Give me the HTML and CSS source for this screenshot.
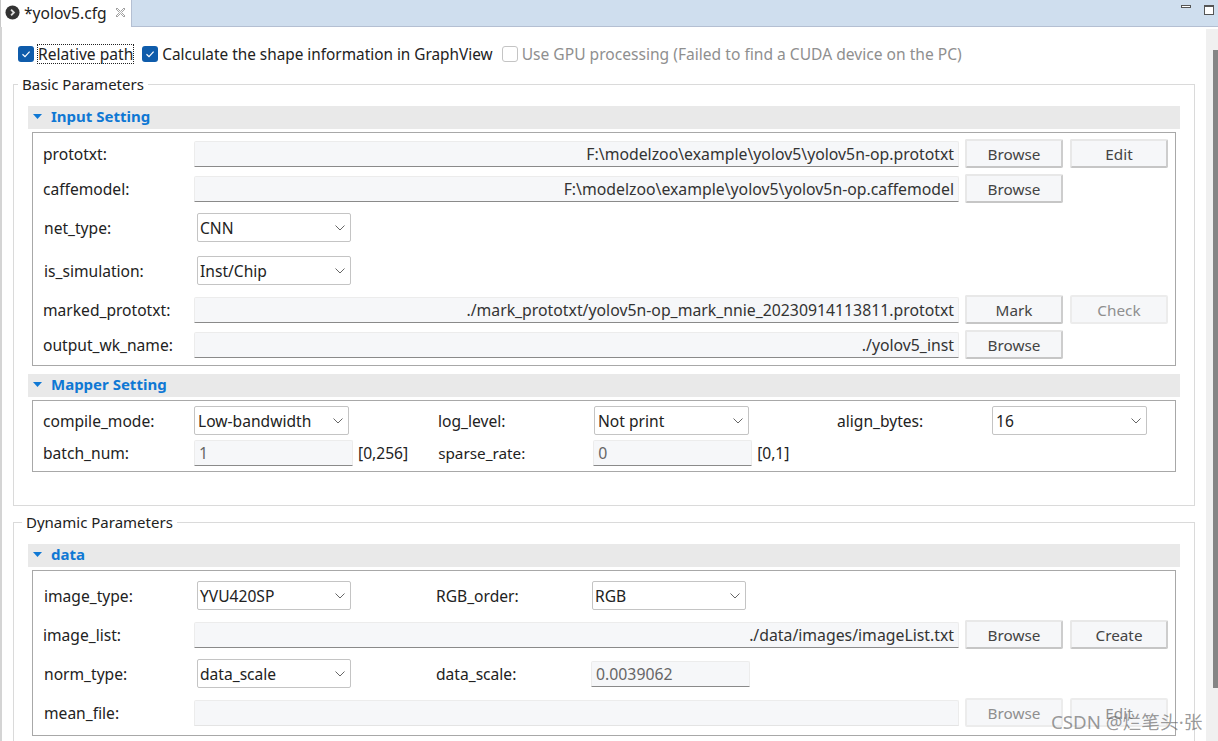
FILE: index.html
```html
<!DOCTYPE html>
<html lang="en">

<head>
    <meta charset="UTF-8">
    <title>yolov5.cfg</title>
    <link rel="stylesheet" href="styles.css">
</head>

<body>
    <svg class="defs" width="0" height="0">
        <symbol id="chev" viewBox="0 0 10 6">
            <path d="M0.5 0.5 L5 5 L9.5 0.5" fill="none" stroke="#666" stroke-width="1" />
        </symbol>
        <symbol id="tick" viewBox="0 0 16 16">
            <rect width="16" height="16" rx="3" fill="#0f5cab" />
            <path d="M4.5 8.2 L7 10.6 L11.6 5.6" fill="none" stroke="#fff" stroke-width="1.2" />
        </symbol>
        <symbol id="arrow" viewBox="0 0 9 5">
            <path d="M0 0 H9 L4.5 5 Z" fill="#0f78d4" />
        </symbol>
    </svg>

    <div class="tabbar">
        <div class="tab">
            <svg class="tab-icon" viewBox="0 0 16 16">
                <circle cx="8" cy="8" r="7.5" fill="#333" />
                <path d="M6.5 5 L9.5 8 L6.5 11" fill="none" stroke="#ddd" stroke-width="2" />
            </svg>
            <span>*yolov5.cfg</span>
            <svg class="tab-close" viewBox="0 0 11 11">
                <path d="M1 2 L2 1 L5.5 4.5 L9 1 L10 2 L6.5 5.5 L10 9 L9 10 L5.5 6.5 L2 10 L1 9 L4.5 5.5 Z" fill="#fff" stroke="#8a8a8a" stroke-width="0.8" />
            </svg>
        </div>
        <div class="win-btns">
            <span class="win-min"></span>
            <span class="win-max"></span>
        </div>
    </div>

    <div class="editor">
        <div class="content">
            <div class="options">
                <svg class="check"><use href="#tick" /></svg>
                <span class="focused">Relative path</span>
                <svg class="check second"><use href="#tick" /></svg>
                <span class="calc">Calculate the shape information in GraphView</span>
                <span class="check-off"></span>
                <span class="muted">Use GPU processing (Failed to find a CUDA device on the PC)</span>
            </div>

            <fieldset class="group">
                <legend>Basic Parameters</legend>

                <div class="sec-head"><svg class="arrow"><use href="#arrow" /></svg>Input Setting</div>
                <div class="box box-input">
                    <div class="row">
                        <label>prototxt:</label>
                        <div class="text wide">F:\modelzoo\example\yolov5\yolov5n-op.prototxt</div>
                        <button>Browse</button>
                        <button>Edit</button>
                    </div>
                    <div class="row gap-6">
                        <label>caffemodel:</label>
                        <div class="text wide">F:\modelzoo\example\yolov5\yolov5n-op.caffemodel</div>
                        <button>Browse</button>
                    </div>
                    <div class="row gap-10">
                        <label class="lab-sel">net_type:</label>
                        <div class="select">CNN<svg class="chev"><use href="#chev" /></svg></div>
                    </div>
                    <div class="row gap-14">
                        <label class="lab-sel">is_simulation:</label>
                        <div class="select">Inst/Chip<svg class="chev"><use href="#chev" /></svg></div>
                    </div>
                    <div class="row gap-10">
                        <label>marked_prototxt:</label>
                        <div class="text wide">./mark_prototxt/yolov5n-op_mark_nnie_20230914113811.prototxt</div>
                        <button>Mark</button>
                        <button disabled>Check</button>
                    </div>
                    <div class="row gap-6">
                        <label>output_wk_name:</label>
                        <div class="text wide">./yolov5_inst</div>
                        <button>Browse</button>
                    </div>
                </div>

                <div class="sec-head mapper"><svg class="arrow"><use href="#arrow" /></svg>Mapper Setting</div>
                <div class="box box-mapper">
                    <div class="row">
                        <label>compile_mode:</label>
                        <div class="select sel-compile">Low-bandwidth<svg class="chev"><use href="#chev" /></svg></div>
                        <label class="lab-mid">log_level:</label>
                        <div class="select sel-compile">Not print<svg class="chev"><use href="#chev" /></svg></div>
                        <label class="lab-align">align_bytes:</label>
                        <div class="select sel-compile">16<svg class="chev"><use href="#chev" /></svg></div>
                    </div>
                    <div class="row row-short">
                        <label>batch_num:</label>
                        <div class="text num left">1</div>
                        <span class="range">[0,256]</span>
                        <label class="lab-sparse">sparse_rate:</label>
                        <div class="text num left">0</div>
                        <span class="range">[0,1]</span>
                    </div>
                </div>
            </fieldset>

            <fieldset class="group dynamic">
                <legend>Dynamic Parameters</legend>

                <div class="sec-head"><svg class="arrow"><use href="#arrow" /></svg>data</div>
                <div class="box box-data">
                    <div class="row">
                        <label class="lab-sel">image_type:</label>
                        <div class="select">YVU420SP<svg class="chev"><use href="#chev" /></svg></div>
                        <label class="lab-rgb">RGB_order:</label>
                        <div class="select">RGB<svg class="chev"><use href="#chev" /></svg></div>
                    </div>
                    <div class="row gap-10">
                        <label>image_list:</label>
                        <div class="text wide">./data/images/imageList.txt</div>
                        <button>Browse</button>
                        <button>Create</button>
                    </div>
                    <div class="row gap-10">
                        <label class="lab-sel">norm_type:</label>
                        <div class="select">data_scale<svg class="chev"><use href="#chev" /></svg></div>
                        <label class="lab-scale">data_scale:</label>
                        <div class="text num left">0.0039062</div>
                    </div>
                    <div class="row gap-10">
                        <label class="lab-pad">mean_file:</label>
                        <div class="text wide off"></div>
                        <button disabled>Browse</button>
                        <button disabled>Edit</button>
                    </div>
                </div>
            </fieldset>
        </div>

        <div class="scrollbar"><div class="thumb"></div></div>
    </div>

    <div class="watermark">CSDN @烂笔头·张</div>
</body>

</html>
```

FILE: styles.css
```css
body {
    margin: 0;
    width: 1218px;
    height: 741px;
    overflow: hidden;
    position: relative;
    background-color: #fff;
    color: #222;
    font-family: "Noto Sans", "Noto Sans CJK SC", sans-serif;
    font-size: 15.6px;
    line-height: 20px;
}

.defs {
    position: absolute;
}

/* tab strip */
.tabbar {
    height: 26px;
    display: flex;
    justify-content: space-between;
    background-color: #cfdeee;
    border-bottom: 1px solid #b4bfd2;
}

.tab {
    width: 132px;
    height: 27px;
    box-sizing: border-box;
    display: flex;
    align-items: center;
    padding: 0 0 2px 5px;
    background-color: #fff;
    border-right: 1px solid #b4bfd2;
    border-left: 1px solid #c8c8c8;
    font-size: 15.6px;
}

.tab-icon {
    width: 15px;
    height: 15px;
    margin-left: -1px;
    margin-right: 4px;
}

.tab-close {
    width: 11px;
    height: 11px;
    margin-left: 8px;
}

.win-btns {
    display: flex;
    align-items: flex-start;
    padding: 5px 4px 0 0;
}

.win-min {
    width: 10px;
    height: 3px;
    border: 1px solid #555;
    box-sizing: border-box;
    background-color: #fff;
    margin-right: 13px;
}

.win-max {
    width: 10px;
    height: 10px;
    border: 1px solid #555;
    border-top-width: 2px;
    box-sizing: border-box;
    background-color: #fff;
}

/* main area */
.editor {
    height: 714px;
    display: flex;
    border-left: 2px solid #d4d4d4;
}

.content {
    flex: 1;
    padding-left: 11px;
    min-width: 0;
}

.scrollbar {
    width: 12px;
    margin-top: 2px;
    background-color: #f0f0f0;
    padding: 21px 0 0 7px;
    box-sizing: border-box;
}

.thumb {
    width: 5px;
    height: 638px;
    background-color: #858585;
}

.options {
    height: 20px;
    margin-top: 17px;
    display: flex;
    align-items: center;
    padding-left: 5px;
    white-space: nowrap;
}

.check {
    width: 16px;
    height: 16px;
    flex: none;
}

.check.second {
    margin: 0 4px 0 8px;
}

.focused {
    margin-left: 3px;
    padding: 0 1px;
    outline: 1px dotted #222;
    outline-offset: -1px;
}

.calc {
    font-size: 15.35px;
}

.check-off {
    width: 14px;
    height: 14px;
    margin-left: 9px;
    margin-right: 4px;
    border: 1px solid #c4c4c4;
    border-radius: 3px;
}

.muted {
    color: #8f8f8f;
}

.group {
    width: 1182px;
    height: 432px;
    box-sizing: border-box;
    margin: 10px 0 0;
    padding: 0 14px;
    border: 1px solid #dadada;
    min-width: 0;
}

.group legend {
    margin-left: -10px;
    padding: 0 4px;
    line-height: 20px;
    font-size: 15px;
}

.dynamic {
    height: 240px;
    margin-top: 6px;
    border-bottom: none;
}

.group.dynamic legend {
    margin-left: -6px;
}

.sec-head {
    height: 23px;
    width: 1152px;
    box-sizing: border-box;
    margin-top: 12px;
    padding-bottom: 4px;
    display: flex;
    align-items: center;
    background-color: #e9e9e9;
    color: #0f78d4;
    font-weight: 700;
    font-size: 15px;
}

.sec-head.mapper {
    margin-top: 8px;
}

.arrow {
    width: 9px;
    height: 5px;
    margin: 2px 9px 0 5px;
}

.box {
    width: 1144px;
    box-sizing: border-box;
    margin: 3px 0 0 4px;
    padding-top: 6px;
    border: 1px solid #a8a8a8;
}

.box-input {
    height: 234px;
}

.box-mapper {
    height: 72px;
    padding-top: 5px;
}

.box-data {
    height: 166px;
    padding-top: 10px;
}

.row {
    height: 29px;
    display: flex;
    align-items: center;
    white-space: nowrap;
}

.row-short {
    margin-top: 3px;
}

.gap-6 {
    margin-top: 6px;
}

.gap-10 {
    margin-top: 10px;
}

.gap-14 {
    margin-top: 14px;
}

label {
    width: 161px;
    padding-left: 10px;
    box-sizing: border-box;
    flex: none;
}

.lab-pad {
    padding-left: 11px;
}

.lab-sel {
    width: 164px;
    padding-left: 11px;
}

.lab-mid {
    width: 156px;
    padding-left: 0;
    margin-left: 89px;
}

.lab-align {
    width: 155px;
    padding-left: 0;
    margin-left: 88px;
}

.lab-sparse {
    width: 155px;
    padding-left: 0;
    margin-left: 30px;
    font-size: 15.3px;
}

.lab-rgb {
    width: 156px;
    padding-left: 0;
    margin-left: 85px;
}

.lab-scale {
    width: 155px;
    padding-left: 0;
    margin-left: 85px;
}

.text {
    height: 26px;
    box-sizing: border-box;
    flex: none;
    padding: 2px 4px 0;
    background-color: #f6f7f9;
    border: 1px solid #ececec;
    border-bottom: 1px solid #8a8a8a;
    border-radius: 2px 2px 0 0;
    text-align: right;
    color: #333;
    font-size: 15.8px;
}

.wide {
    width: 765px;
}

.num {
    width: 159px;
}

.left {
    text-align: left;
    color: #666;
}

.off {
    border-bottom-color: #e4e4e4;
}

.range {
    margin-left: 5px;
}

.select {
    width: 154px;
    height: 29px;
    box-sizing: border-box;
    flex: none;
    display: flex;
    align-items: center;
    justify-content: space-between;
    padding: 0 5px 0 2px;
    background-color: #fff;
    border: 1px solid #c4c4c4;
    border-radius: 2px;
}

.sel-compile {
    width: 155px;
    padding-left: 3px;
}

.chev {
    width: 10px;
    height: 6px;
    flex: none;
}

button {
    width: 98px;
    height: 29px;
    margin-left: 6px;
    padding: 0;
    box-sizing: border-box;
    font: inherit;
    font-size: 15.3px;
    color: #444;
    background-color: #f6f7f9;
    border: 2px solid #e8e8e8;
    border-right-color: #cdcdcd;
    border-bottom-color: #c6c6c6;
    border-radius: 2px;
}

button + button {
    margin-left: 7px;
}

button:disabled {
    color: #8f8f8f;
    border-color: #ececec;
}

.watermark {
    position: absolute;
    left: 1051px;
    top: 709px;
    font-size: 18.7px;
    line-height: 26px;
    color: rgba(90, 90, 90, 0.62);
    white-space: nowrap;
}
```
